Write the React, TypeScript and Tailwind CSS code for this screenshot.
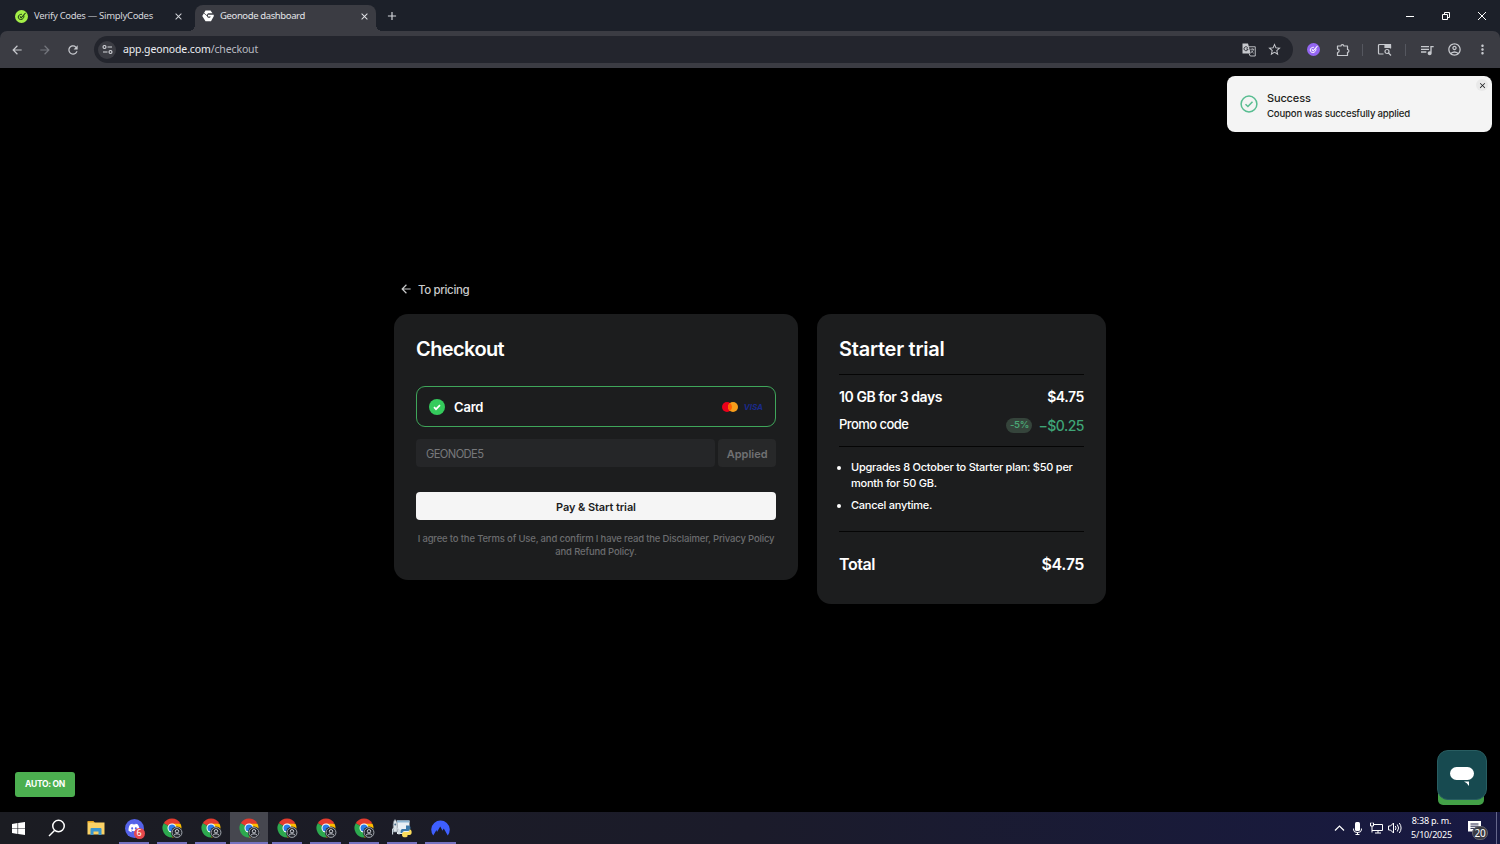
import React from 'react';
import { FaDiscord } from 'react-icons/fa';
import { MdArrowBack, MdArrowForward, MdClose, MdAdd, MdRefresh, MdStarBorder, MdQueueMusic, MdOutlineAccountCircle, MdMoreVert } from 'react-icons/md';

const SimplyIcon = ({ bg, fg }: { bg: string; fg: string }) => (
  <svg className="w-[13px] h-[13px] shrink-0" viewBox="0 0 26 26" fill="none">
    <circle cx="13" cy="13" r="13" fill={bg} />
    <path d="M13 8.500C9 8.500 6.500 11 6.500 14s2 5 5 5c4 0 6.500-3 6.500-7" stroke={fg} strokeWidth="2" strokeLinecap="round" />
    <path d="M10.500 13.500l2 2 8-9" stroke={fg} strokeWidth="2.200" strokeLinecap="round" strokeLinejoin="round" />
  </svg>
);

const GeonodeIcon = () => (
  <svg className="w-[12px] h-[12px] shrink-0" viewBox="0 0 24 24">
    <path d="M7 1h10l4 5.500h-9L9 11l3 4.500h4l1.500-2.500H12V9.500h11.500v3L18 22.500H7L.5 12z" fill="#fff" />
    <path d="M3 5.500L9.500 11" stroke="#3b3c43" strokeWidth="1.600" />
  </svg>
);

const SiteInfoIcon = () => (
  <svg className="w-[11px] h-[11px]" viewBox="0 0 22 22" fill="none" stroke="#d5d7dc" strokeWidth="2.200">
    <circle cx="5" cy="6" r="3" />
    <path d="M11 6h9M2 16h9" />
    <circle cx="17" cy="16" r="3" />
  </svg>
);

const TranslateIcon = () => (
  <svg className="w-[14px] h-[14px]" viewBox="0 0 28 28" fill="none">
    <path d="M13 7.500h13.500V26H16.500L14 21" stroke="#c7c9ce" strokeWidth="1.800" />
    <path d="M1 1h11l5.500 20H1z" fill="#c7c9ce" />
    <path d="M11.500 9.500A4 4 0 1 0 12 12H8.500" stroke="#23252d" strokeWidth="1.800" />
    <path d="M16.500 12.500h8M20.500 10.500v2M23 12.500c-.5 3-2.500 5.500-5 7M18.500 15c1 2 2.500 4 5 5.500" stroke="#c7c9ce" strokeWidth="1.500" />
  </svg>
);

const PuzzleIcon = () => (
  <svg className="w-[14px] h-[14px]" viewBox="0 0 28 28" fill="none" stroke="#c7c9ce" strokeWidth="2.400" strokeLinejoin="round">
    <path d="M3 6h7a2.800 2.800 0 0 1 5.600 0H23v7a2.800 2.800 0 0 1 0 5.600V25H3v-6a3.300 3.300 0 0 0 0-6.600z" />
  </svg>
);

const SearchTabIcon = () => (
  <svg className="w-[15px] h-[13px]" viewBox="0 0 30 26" fill="none" stroke="#c7c9ce" strokeWidth="2.400">
    <path d="M13 22H5a2 2 0 0 1-2-2V5a2 2 0 0 1 2-2h20a2 2 0 0 1 2 2v6" />
    <path d="M16 3h11v6H16z" fill="#c7c9ce" />
    <circle cx="20" cy="17" r="4" />
    <path d="M23 20l5 5" />
  </svg>
);

const ChromeIcon = () => (
  <svg className="ml-[2px] mt-[2px] w-[22px] h-[22px]" viewBox="0 0 44 44">
    <path d="M20 20L3.500 10.500A19 19 0 0 1 36.500 10.500z" fill="#e33b2e" />
    <path d="M20 20L3.500 10.500A19 19 0 0 0 20 39L28.200 24.700z" fill="#2da94f" />
    <path d="M20 11.500h17A19 19 0 0 1 20 39l8-14.500z" fill="#fdbd00" />
    <circle cx="20" cy="20" r="9" fill="#fff" />
    <circle cx="20" cy="20" r="7" fill="#2a7de8" />
    <circle cx="30" cy="29" r="12" fill="#22252c" />
    <circle cx="30" cy="29" r="9.800" fill="none" stroke="#a9adb5" strokeWidth="1.800" />
    <circle cx="30" cy="26.500" r="3.400" fill="none" stroke="#c5c8cf" strokeWidth="2" />
    <path d="M24 34.500c1.500-3.800 10.500-3.800 12 0" fill="none" stroke="#c5c8cf" strokeWidth="2" />
  </svg>
);

const WindowsIcon = () => (
  <svg className="w-[13px] h-[13px] mr-px mt-px" viewBox="0 0 26 26" fill="#fff">
    <path d="M0 3.800L11 2.200v10.200H0zM12.300 2L26 0v12.400H12.300zM0 13.600h11v10.200L0 22.200zM12.300 13.600H26V26l-13.700-2z" />
  </svg>
);

const TaskSearchIcon = () => (
  <svg className="w-[18px] h-[18px] mr-px" viewBox="0 0 36 36" fill="none" stroke="#fff" strokeWidth="3">
    <circle cx="21" cy="14" r="11.500" />
    <path d="M13 23L2 34" />
  </svg>
);

const FolderIcon = () => (
  <svg className="w-[18px] h-[16px]" viewBox="0 0 36 32">
    <path d="M1 2h12l3 4H1z" fill="#e8a520" />
    <path d="M1 5h34v24H1z" fill="#fbd266" />
    <path d="M7 30V18q0-2 2-2h18q2 0 2 2v12h-6v-7H13v7z" fill="#3a96d0" />
  </svg>
);

const DiscordIcon = () => (
  <div className="relative w-[19px] h-[19px] mt-px rounded-full bg-[#5563e8] flex items-center justify-center">
    <FaDiscord className="text-white" size={12} />
    <span className="absolute left-[9px] top-[9px] w-[11px] h-[11px] rounded-full bg-[#e5484d] text-white text-[9px] leading-[10px] text-center">6</span>
  </div>
);

const PythonIcon = () => (
  <svg className="w-[20px] h-[20px] mt-px" viewBox="0 0 40 40">
    <path d="M10 5h25v27H10z" fill="#e9f0f5" />
    <path d="M10 5h25v4H10z" fill="#8fb7d3" />
    <path d="M6 3c4 3 5 8 4.500 15v10h-8V18C2 11 3 6 6 3z" fill="#dce3e8" stroke="#7b8791" strokeWidth="1.400" />
    <path d="M1 33V23l4-3M14 33V24l-4-4" stroke="#c9d3da" strokeWidth="2.500" fill="none" />
    <circle cx="6.500" cy="13" r="2" fill="#4c6e8a" />
    <path d="M17 28c0-5 2-6 6-6h5v-7h5c3 0 4 2 4 5 0 4-2 6-5 6h-7c-3 0-4 2-4 4h-4z" fill="#3b78a8" />
    <path d="M20 34c0-5 2-6 6-6h6c2 0 3-2 3-5 4 0 5 4 4 8-1 3-3 3-5 3h-3v3c-4 3-11 2-11-3z" fill="#fbdc5c" />
  </svg>
);

const NordIcon = () => (
  <svg className="w-[19px] h-[17px] mb-px" viewBox="0 0 38 34">
    <path d="M4.500 33A18.500 18.500 0 1 1 33.500 33L25.500 19l-2.500 4 1 2.500L18.500 15 12 26l-1-4z" fill="#3e5fff" />
  </svg>
);

const tasks = [
  { icon: <WindowsIcon />, open: false },
  { icon: <TaskSearchIcon />, open: false },
  { icon: <FolderIcon />, open: false },
  { icon: <DiscordIcon />, open: true },
  { icon: <ChromeIcon />, open: true },
  { icon: <ChromeIcon />, open: true },
  { icon: <ChromeIcon />, open: true, active: true },
  { icon: <ChromeIcon />, open: true },
  { icon: <ChromeIcon />, open: true },
  { icon: <ChromeIcon />, open: true },
  { icon: <PythonIcon />, open: true },
  { icon: <NordIcon />, open: true },
];

function BrowserBar() {
  return (
    <header className="h-[68px] bg-[#1c2029] font-['Noto_Sans',sans-serif] text-[#d4d6db]">
      <div className="h-[31px] flex items-end">
        <div className="w-[195px] h-[31px] pt-px pl-[15px] pr-[11px] flex items-center">
          <SimplyIcon bg="#a4ef48" fg="#1b3a12" />
          <span className="ml-[6px] text-[9.500px] tracking-[-0.31px] whitespace-nowrap">Verify Codes — SimplyCodes</span>
          <MdClose className="ml-auto" size={11} />
        </div>
        <div className="relative w-[181px] h-[26px] pb-[4px] pl-[7px] pr-[6px] flex items-center bg-[#3b3c43] rounded-t-[8px]">
          <span className="absolute -left-[6px] bottom-0 w-[6px] h-[6px] bg-[radial-gradient(circle_at_0_0,#1c2029_6px,#3b3c43_6px)]" />
          <span className="absolute -right-[6px] bottom-0 w-[6px] h-[6px] bg-[radial-gradient(circle_at_100%_0,#1c2029_6px,#3b3c43_6px)]" />
          <GeonodeIcon />
          <span className="ml-[6px] text-[9.500px] tracking-[-0.38px] whitespace-nowrap text-[#e3e4e8]">Geonode dashboard</span>
          <MdClose className="ml-auto text-[#e3e4e8]" size={11} />
        </div>
        <div className="h-[31px] flex items-center pl-[9px]">
          <MdAdd size={14} />
        </div>
        <div className="ml-auto h-[31px] flex items-center gap-[26px] pr-[13px] text-white">
          <svg className="w-[10px] h-[10px]" viewBox="0 0 10 10" stroke="currentColor"><path d="M1 5.500h8" /></svg>
          <svg className="w-[10px] h-[10px]" viewBox="0 0 10 10" fill="none" stroke="currentColor"><path d="M1.500 3.500h5v5h-5zM3.500 3V1.500h5v5H7" /></svg>
          <svg className="w-[10px] h-[10px]" viewBox="0 0 10 10" stroke="currentColor"><path d="M1 1l8 8M9 1L1 9" /></svg>
        </div>
      </div>
      <div className="h-[37px] bg-[#3b3c43] rounded-t-[7px] flex items-center pl-[10px] text-[#c7c9ce]">
        <MdArrowBack size={14} />
        <MdArrowForward className="ml-[14px] text-[#75777e]" size={14} />
        <MdRefresh className="ml-[14px]" size={14} />
        <div className="ml-[14px] w-[1199px] h-[27px] rounded-full bg-[#23252d] flex items-center pl-[4px]">
          <div className="w-[18px] h-[18px] rounded-full bg-[#3b3c43] flex items-center justify-center">
            <SiteInfoIcon />
          </div>
          <span className="ml-[7px] text-[10.500px] tracking-[-0.13px] text-[#b9bbc2]"><span className="text-[#eceef2]">app.geonode.com</span>/checkout</span>
          <div className="ml-auto"><TranslateIcon /></div>
          <MdStarBorder className="ml-[11px] mr-[11px]" size={15} />
        </div>
        <div className="ml-[14px]"><SimplyIcon bg="#9466f2" fg="#fff" /></div>
        <div className="ml-[16px]"><PuzzleIcon /></div>
        <span className="ml-[12px] w-px h-[12px] bg-[#55575f]" />
        <div className="ml-[14px]"><SearchTabIcon /></div>
        <span className="ml-[13px] w-px h-[12px] bg-[#55575f]" />
        <MdQueueMusic className="ml-[13px]" size={16} />
        <MdOutlineAccountCircle className="ml-[12px]" size={15} />
        <MdMoreVert className="ml-[13px]" size={15} />
      </div>
    </header>
  );
}

function CheckoutCard() {
  return (
    <section className="w-[404px] h-[266px] rounded-[14px] bg-[#1c1d1e] px-[22px] pt-[22px]">
      <h1 className="text-[20px] leading-[26px] font-semibold tracking-[-0.6px]">Checkout</h1>
      <div className="mt-[24px] h-[41px] rounded-[9px] border border-[#3fa65a] flex items-center pl-[12px] pr-[12px]">
        <svg className="w-[16px] h-[16px]" viewBox="0 0 16 16" fill="none">
          <circle cx="8" cy="8" r="8" fill="#34cb5c" />
          <path d="M5 8.200l2 2 4-4" stroke="#fff" strokeWidth="1.700" />
        </svg>
        <span className="ml-[9px] pt-[2px] text-[13px] font-semibold tracking-[-0.2px]">Card</span>
        <svg className="ml-auto w-[16px] h-[10px]" viewBox="0 0 16 10">
          <circle cx="5" cy="5" r="5" fill="#eb001b" />
          <circle cx="11" cy="5" r="5" fill="#f79e1b" />
          <path d="M8 1a5 5 0 0 1 0 8a5 5 0 0 1 0-8" fill="#ff5f00" />
        </svg>
        <span className="ml-[6px] text-[8px] font-bold italic text-[#1a2a8a]">VISA</span>
      </div>
      <div className="mt-[12px] flex gap-[3px] text-[#77787b]">
        <div className="w-[300px] h-[28px] rounded-[4px] bg-[#252628] px-[10px] pt-[2px] flex items-center text-[11.200px] tracking-[-0.6px]">GEONODE5</div>
        <div className="w-[58px] h-[28px] rounded-[4px] bg-[#272829] pt-[2px] flex items-center justify-center text-[11px] font-semibold text-[#707173]">Applied</div>
      </div>
      <button className="mt-[25px] pt-[2px] w-full h-[28px] rounded-[4px] bg-[#f5f5f5] text-[#1c1d1e] text-[11px] font-semibold tracking-[-0.1px] block">Pay &amp; Start trial</button>
      <p className="mt-[13px] text-center text-[9.500px] leading-[12.500px] font-medium tracking-[-0.17px] text-[#6b6c6e]">
        <span className="whitespace-nowrap">I agree to the Terms of Use, and confirm I have read the Disclaimer, Privacy Policy</span>
        <br />and Refund Policy.
      </p>
    </section>
  );
}

function SummaryCard() {
  return (
    <section className="w-[289px] h-[290px] rounded-[14px] bg-[#1c1d1e] px-[22px] pt-[22px]">
      <h2 className="text-[20px] leading-[26px] font-semibold tracking-[-0.25px]">Starter trial</h2>
      <div className="mt-[12px] h-px bg-[#050505]" />
      <div className="mt-[12px] flex justify-between text-[14px] leading-[20px] font-semibold tracking-[-0.4px]">
        <span>10 GB for 3 days</span>
        <span>$4.75</span>
      </div>
      <div className="mt-[8px] h-[20px] flex items-center">
        <span className="text-[13px] font-medium tracking-[-0.55px]">Promo code</span>
        <span className="ml-auto w-[26px] h-[15px] rounded-full bg-[#35443b] text-[#4aa574] text-[9.500px] font-semibold tracking-[-0.3px] flex items-center justify-center">-5%</span>
        <span className="ml-[6px] text-[14px] font-medium tracking-[-0.5px] text-[#3fa577]">−$0.25</span>
      </div>
      <div className="mt-[11px] h-px bg-[#050505]" />
      <ul className="mt-[13px] list-disc pl-[12px] text-[11px] leading-[15.500px] font-medium tracking-[-0.24px]">
        <li>Upgrades 8 October to Starter plan: $50 per<br />month for 50 GB.</li>
        <li className="mt-[6.500px]">Cancel anytime.</li>
      </ul>
      <div className="mt-[18px] h-px bg-[#050505]" />
      <div className="mt-[21px] flex justify-between text-[16px] leading-[22px] font-semibold tracking-[-0.4px]">
        <span>Total</span>
        <span>$4.75</span>
      </div>
    </section>
  );
}

function Toast() {
  return (
    <div className="absolute right-[8px] top-[8px] w-[265px] h-[56px] rounded-[8px] bg-[#f4f4f4] text-[#1d1e20] pl-[13px] flex items-center">
      <svg className="w-[18px] h-[18px]" viewBox="0 0 18 18" fill="none" stroke="#58bd91" strokeWidth="1.500">
        <circle cx="9" cy="9" r="7.900" />
        <path d="M5.500 9.200l2.400 2.300 4.600-4.800" />
      </svg>
      <div className="ml-[9px] pt-[2px]">
        <div className="text-[11px] leading-[16px] font-medium tracking-[-0.15px]">Success</div>
        <div className="text-[9.600px] leading-[15px] font-medium tracking-[-0.19px]">Coupon was succesfully applied</div>
      </div>
      <span className="absolute right-[4px] top-[3px] w-[12px] h-[12px] rounded-full bg-[#e9e9e9] flex items-center justify-center">
        <MdClose size={9} />
      </span>
    </div>
  );
}

function Taskbar() {
  return (
    <footer className="h-[32px] flex bg-linear-to-r from-[#1b1c22] via-[#1b1b2a] to-[#181943] font-['Noto_Sans',sans-serif] text-white">
      {tasks.map((task, i) => (
        <div key={i} className={`relative w-[38.300px] h-[32px] flex items-center justify-center pb-[1px] ${task.active ? 'bg-[#46474f]' : ''}`}>
          {task.icon}
          {task.open && <span className={`absolute bottom-0 h-[2px] bg-[#7673c0] ${task.active ? 'inset-x-0' : 'inset-x-[4px]'}`} />}
        </div>
      ))}
      <div className="ml-auto flex items-center">
        <svg className="w-[11px] h-[8px]" viewBox="0 0 11 8" fill="none" stroke="#fff" strokeWidth="1.200"><path d="M1 6.500l4.500-4.500L10 6.500" /></svg>
        <svg className="ml-[8px] w-[9px] h-[13px]" viewBox="0 0 9 13" fill="none" stroke="#fff">
          <rect x="2" y="0" width="5" height="9" rx="1.500" fill="#fff" stroke="none" />
          <path d="M.6 6.500v1.500q0 2.500 3.900 2.500t3.900-2.500V6.500M4.500 10v2.500M2.500 12.500h4" />
        </svg>
        <svg className="ml-[8px] w-[13px] h-[12px]" viewBox="0 0 13 12" fill="none" stroke="#fff">
          <path d="M4 2.500h8.500v6H4M8 8.500v2.500M5 11h6M.5 1v3h3V1M2 4v6.500M2 8.500h2M1 .5v1M3 .5v1" />
        </svg>
        <svg className="ml-[5px] w-[14px] h-[12px]" viewBox="0 0 14 12" fill="none" stroke="#fff">
          <path d="M.5 4h2L5.500 1v10l-3-3h-2zM7.300 4q1.500 2 0 4M9.300 2.500q2.600 3.500 0 7M11.300 1q3.600 5 0 10" />
        </svg>
        <div className="ml-[7px] w-[45px] text-center text-[9px] leading-[14px] tracking-[-0.2px] whitespace-nowrap">
          <div>8:38 p. m.</div>
          <div>5/10/2025</div>
        </div>
        <div className="relative ml-[14px] w-[32px] h-[32px]">
          <svg className="absolute left-0 top-[9px] w-[13px] h-[13px]" viewBox="0 0 13 13">
            <path d="M0 0h13v10.500H7L4.500 13v-2.500H0z" fill="#fff" />
            <path d="M2.500 3h8M2.500 5.200h8M2.500 7.400h8" stroke="#24254a" />
          </svg>
          <span className="absolute left-[4px] top-[14px] w-[16px] h-[14px] rounded-full bg-[#3a3b43] border border-[#62636c] text-[10px] leading-[12px] text-center tracking-[-0.3px]">20</span>
          <span className="absolute right-[3px] top-0 w-px h-[32px] bg-[#65668a]" />
        </div>
      </div>
    </footer>
  );
}

export default function App() {
  return (
    <div className="w-[1500px] h-[844px] flex flex-col overflow-hidden bg-black font-['Inter',sans-serif] text-white">
      <BrowserBar />
      <main className="relative flex-1 bg-black">
        <div className="pt-[212px] pl-[394px]">
          <a className="flex items-center h-[18px] pl-[5px] text-[#c9cacb]">
            <MdArrowBack size={14} />
            <span className="ml-[5px] pt-[3px] text-[11.500px] font-medium tracking-[-0.35px]">To pricing</span>
          </a>
          <div className="mt-[16px] flex items-start gap-[19px]">
            <CheckoutCard />
            <SummaryCard />
          </div>
        </div>
        <Toast />
        <button className="absolute left-[15px] bottom-[15px] w-[60px] h-[25px] rounded-[3px] bg-[#4caf50] text-[8.500px] font-bold tracking-[-0.3px]">AUTO: ON</button>
        <div className="absolute left-[1438px] top-[710px] w-[46px] h-[27px] rounded-[5px] bg-[#43a047]" />
        <div className="absolute left-[1437px] top-[682px] w-[50px] h-[50px] rounded-[11px] bg-[#174a50] border border-[#285d61] pt-[4px] flex items-center justify-center">
          <svg className="w-[24px] h-[20px]" viewBox="0 0 24 20" fill="#fff">
            <rect width="24" height="13" rx="6.500" />
            <path d="M14 14.500h5V19q-2-3.500-5-4.500z" />
          </svg>
        </div>
      </main>
      <Taskbar />
    </div>
  );
}
